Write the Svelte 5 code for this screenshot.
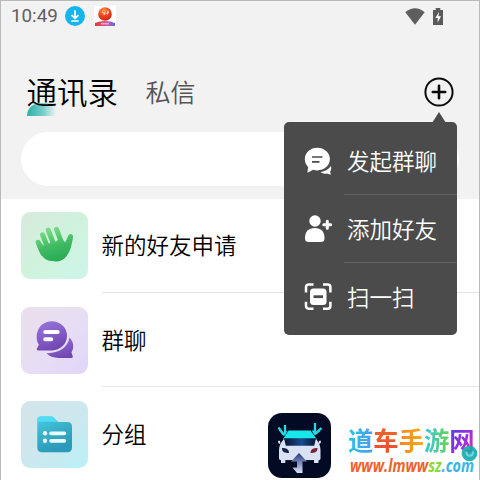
<script>
    const contacts = [
        { label: '新的好友申请', icon: 'hand' },
        { label: '群聊', icon: 'chat' },
        { label: '分组', icon: 'folder' }
    ];

    const actions = [
        { label: '发起群聊', icon: 'bubble' },
        { label: '添加好友', icon: 'person' },
        { label: '扫一扫', icon: 'scan' }
    ];

    const siteName = ['道', '车', '手', '游', '网'];

    let tab = $state('contacts');
    let menuOpen = $state(true);
</script>

<div class="phone">
    <header>
        <div class="status">
            <span class="time">10:49</span>
            <svg class="download" width="20" height="20" viewBox="0 0 20 20">
                <circle cx="10" cy="10" r="10" fill="#16b5ee" />
                <path d="M10 4.2v8M6.6 9.2l3.4 3.4 3.4-3.4M6.3 15h7.4" fill="none" stroke="#fff" stroke-width="1.7" />
            </svg>
            <svg class="app" width="22" height="20" viewBox="0 0 22 20">
                <defs>
                    <radialGradient id="ball" cx=".4" cy=".25" r=".75">
                        <stop offset="0" stop-color="#ff9a4d" />
                        <stop offset=".5" stop-color="#f4491d" />
                        <stop offset="1" stop-color="#cf2414" />
                    </radialGradient>
                    <linearGradient id="ribbon">
                        <stop offset="0" stop-color="#dd3b2d" />
                        <stop offset=".55" stop-color="#d25aa0" />
                        <stop offset="1" stop-color="#6c62ee" />
                    </linearGradient>
                </defs>
                <rect width="22" height="20" fill="#fff" />
                <circle cx="11" cy="8" r="6.8" fill="url(#ball)" />
                <path d="M8 6l3 2M10 9l1.500-3.500M12.500 7.500l2.500-1.500M14 4.500l-.5 4" stroke="#ffe3cf" stroke-width="1" fill="none" />
                <path d="M1 17q10-4 20 0v3H1z" fill="url(#ribbon)" />
                <path d="M7 17.800h8" stroke="#fff" stroke-width="1" stroke-dasharray="1.500 .6" />
            </svg>
            <svg class="wifi" width="20" height="17" viewBox="0 0 20 17">
                <path d="M.3 4.200Q10-3.500 19.700 4.200L10 16.800z" fill="#5e5e5e" />
            </svg>
            <svg class="battery" width="10" height="17" viewBox="0 0 10 17">
                <path d="M0 2h2.700V0h4.600v2H10v15H0z" fill="#5a5a5a" />
                <path d="M6 4L2.300 10h2.400v4.500L8 8.300H5.500z" fill="#fff" />
            </svg>
        </div>
        <div class="tabs">
            <button class="tab" class:active={tab === 'contacts'} onclick={() => (tab = 'contacts')}>通讯录</button>
            <button class="tab" class:active={tab === 'direct'} onclick={() => (tab = 'direct')}>私信</button>
            <button class="plus" aria-label="更多" onclick={() => (menuOpen = !menuOpen)}>
                <svg width="30" height="30" viewBox="0 0 30 30">
                    <circle cx="15" cy="15" r="13.600" fill="none" stroke="#0b0b0b" stroke-width="2" />
                    <path d="M15 8.800v12.400M8.800 15h12.400" stroke="#0b0b0b" stroke-width="2.600" stroke-linecap="round" />
                </svg>
            </button>
        </div>
        <div class="search"></div>
    </header>

    <main>
        {#each contacts as item}
            <div class="row">
                <div class="tile {item.icon}">
                    {#if item.icon === 'hand'}
                        <svg width="67" height="67" viewBox="0 0 67 67">
                            <defs>
                                <linearGradient id="hand" gradientUnits="userSpaceOnUse" x1="27" y1="13" x2="39" y2="52">
                                    <stop offset="0" stop-color="#85e58b" />
                                    <stop offset=".5" stop-color="#43bd65" />
                                    <stop offset="1" stop-color="#21a64b" />
                                </linearGradient>
                            </defs>
                            <g stroke="url(#hand)" stroke-width="5" stroke-linecap="round">
                                <path d="M17.200 30.300l4.800 11" />
                                <path d="M21.500 22.800l6 15" />
                                <path d="M27.200 18l6.500 17" />
                                <path d="M35.500 17.300l6.500 17" />
                            </g>
                            <path
                                d="M15.200 31.500l4-1.500 3.500 3.500 3-2.500 3 .2 2.500-2 3.500.5 2.500-2.200 2.700-1.500 3 3.200c.5 1 1.400 1 1.900.1l2.500-5.700c1.500-3 5.400-1.800 4.700 1.700-1.300 8-2.600 13.600-6.200 18.400-3.400 4.500-8.400 6.900-14.600 5.400C22.500 49 18.300 41.500 15.200 31.500z"
                                fill="url(#hand)"
                            />
                        </svg>
                    {:else if item.icon === 'chat'}
                        <svg width="67" height="67" viewBox="0 0 67 67">
                            <defs>
                                <linearGradient id="talk" x1=".2" y1="0" x2=".6" y2="1">
                                    <stop offset="0" stop-color="#9874dc" />
                                    <stop offset="1" stop-color="#7145af" />
                                </linearGradient>
                            </defs>
                            <path d="M48.500 30.500c4.200 4.300 4.900 10.200 1.900 14.800l1.300 3.800c.4 1.300-.2 1.900-1.400 1.900H37.500c-5 0-9.200-1.500-12-4.900 11.500.6 21.500-5.500 23-15.600z" fill="url(#talk)" />
                            <path d="M30.800 14.300c8.600 0 15.200 6.400 15.200 14.500S39.400 43.400 30.800 43.400H17.300c-1.500 0-2-.9-1.300-2.100l1.900-3.500C12.500 28.700 17.500 14.300 30.800 14.300z" fill="url(#talk)" />
                            <path d="M24.200 25h12.500M24.200 32.300h6" stroke="#fff" stroke-width="4" stroke-linecap="round" />
                        </svg>
                    {:else}
                        <svg width="67" height="67" viewBox="0 0 67 67">
                            <defs>
                                <linearGradient id="folder" x1="0" y1="0" x2=".4" y2="1">
                                    <stop offset="0" stop-color="#49cfe5" />
                                    <stop offset=".5" stop-color="#39afc9" />
                                    <stop offset="1" stop-color="#299ab9" />
                                </linearGradient>
                            </defs>
                            <path d="M20 15.600h10.500c3 0 4.500 5.400 7.500 5.400h8.300c3.200 0 4.700 1.500 4.700 4.600v20.900c0 3.200-1.500 4.700-4.700 4.700H21c-3.200 0-4.700-1.500-4.700-4.700V19.500c0-2.600 1.200-3.900 3.700-3.900z" fill="url(#folder)" />
                            <path d="M20 15.600h10.500c2.600 0 4 4 6.300 5.100H20.500c-2 0-3.500.4-4.200 1.700v-2.900c0-2.600 1.200-3.900 3.700-3.900z" fill="#50dcf3" />
                            <path d="M30 32.300h13.300M30 39.800h13.300" stroke="#e9fbff" stroke-width="3.700" stroke-linecap="round" />
                            <circle cx="24" cy="32.300" r="2.200" fill="#e9fbff" />
                            <circle cx="24" cy="39.800" r="2.200" fill="#e9fbff" />
                        </svg>
                    {/if}
                </div>
                <div class="label">{item.label}</div>
            </div>
        {/each}
    </main>

    {#if menuOpen}
        <div class="menu">
            {#each actions as action}
                <div class="action">
                    <svg width="28" height="28" viewBox="0 0 28 28" fill="#fff">
                        {#if action.icon === 'bubble'}
                            <path d="M13.300.8c7 0 12.600 4.900 12.600 11.300S20.300 23.400 13.300 23.400c-1.500 0-2.900-.2-4.200-.6L4.600 25.300c-.7.400-1.300 0-1.100-.8l.6-4.500C2 18 .8 15.300.8 12.100.8 5.700 6.300.8 13.300.8z" />
                            <path d="M26.800 19c.8 2 .6 4-.7 5.600l.6 2.200c.1.700-.3 1-.9.800l-2.700-1.100c-2.500.6-4.800 0-6.500-1.500 4.600-.5 8.200-2.600 10.200-6z" />
                            <path d="M8 10h10.500M8 14.800h7.500" stroke="#4b4b4b" stroke-width="1.700" />
                        {:else if action.icon === 'person'}
                            <circle cx="11" cy="6" r="5.700" />
                            <path d="M1 23C1 16.500 4.600 13 10.800 13S20.500 16.500 20.500 23c0 3-1.300 4-4 4H5c-2.700 0-4-1-4-4z" />
                            <path d="M23.300 6.200v7M19.800 9.700h7" stroke="#fff" stroke-width="3" stroke-linecap="round" />
                        {:else}
                            <path d="M2 9.500V4.200C2 2.500 3 1.500 4.700 1.500H9.500M19 1.500h4.700C25.400 1.500 26.400 2.500 26.400 4.200v5.300M26.400 18.700v4.300c0 1.700-1 2.700-2.700 2.700H19M9.500 25.700H4.700C3 25.700 2 24.700 2 23v-4.300" fill="none" stroke="#fff" stroke-width="2.500" />
                            <rect x="6" y="5.500" width="16.500" height="16.500" rx="3.500" />
                            <path d="M9.500 13.700h9.500" stroke="#4b4b4b" stroke-width="2.800" />
                        {/if}
                    </svg>
                    <div class="name">{action.label}</div>
                </div>
            {/each}
        </div>
    {/if}

    <svg class="logo" width="63" height="65" viewBox="0 0 63 65">
        <defs>
            <linearGradient id="glass">
                <stop offset="0" stop-color="#081433" />
                <stop offset=".55" stop-color="#174b8c" />
                <stop offset="1" stop-color="#081433" />
            </linearGradient>
            <linearGradient id="arrow" x1="0" y1="0" x2="0" y2="1">
                <stop offset="0" stop-color="#24347a" />
                <stop offset="1" stop-color="#dce5fa" />
            </linearGradient>
        </defs>
        <rect width="63" height="65" rx="14" fill="#030a23" />
        <path d="M10.500 14.500l5 7M17 12v9.500M53.500 15l-6 5.700M47 10v11" stroke="#23d9e6" stroke-width="2.300" fill="none" />
        <path d="M11.500 17l4.500 5 2.500-4M52 17.500l-5 4-2.500-4" stroke="#23d9e6" stroke-width="1.500" fill="none" />
        <path d="M20.500 17.500h22l6.500 9H14.800z" fill="#18e8e9" />
        <path d="M15.500 26.500h33c3 4 4 7 4 11v8c0 1-1 1.800-2 1.800V50h-4.500v-2.700H17.500V50H13v-2.700c-1-.2-2-1-2-2.100v-8c0-4 1.500-7.200 4.500-10.700z" fill="#d9e1f4" />
        <path d="M16 25.300h32l-1.800 7.500H17.800z" fill="url(#glass)" />
        <path d="M14 35c4 0 7 1 7 5-4 0-7-.5-7-5z" fill="#172244" />
        <path d="M49.500 35c-4 0-7 1-7 5 4 0 7-.5 7-5z" fill="#79203c" />
        <path d="M17.500 47.300h28.500V50h-28.500z" fill="#030a23" />
        <path d="M31 40l8 8.500h-4.500V60H29l-4.500-5.500H29v-6h-6z" fill="url(#arrow)" />
        <path d="M10.500 27.500c1.500 0 2 1 1.800 3.500-2.200-.3-2.800-2-1.800-3.500zM52.500 27.500c-1.500 0-2 1-1.800 3.500 2.200-.3 2.800-2 1.800-3.500z" fill="#dce4f5" />
    </svg>

    <div class="site">
        <div class="sitename">
            {#each siteName as char, i}<span class="c{i}">{char}</span>{/each}
        </div>
        <div class="url"><span class="u0">www.lmww</span><span class="u1">sz</span><span class="u2">.com</span></div>
    </div>
    <svg class="badge" width="17" height="17" viewBox="0 0 17 17">
        <circle cx="8.500" cy="8.500" r="7.800" fill="#15aaa8" fill-opacity=".9" />
        <path d="M5.500 6.500C5 12.500 12 12 12 6.500" fill="none" stroke="#70d5ed" stroke-width="2" />
    </svg>
</div>

<style>
    :global(body) {
        overflow: hidden;
    }

    .phone {
        position: relative;
        box-sizing: border-box;
        width: 480px;
        height: 480px;
        overflow: hidden;
        border: 1px solid #b9b9b9;
        border-bottom: 0;
        background: #fff;
        font-family: Roboto, 'Noto Sans CJK SC', sans-serif;
        font-weight: 350;
        color: #000;
    }

    svg {
        display: block;
        flex: none;
    }

    header {
        box-sizing: border-box;
        height: 198px;
        background: #f2f2f2;
    }

    .status {
        display: flex;
        align-items: center;
        height: 30px;
        padding: 0 36px 0 10px;
    }

    .time {
        width: 54px;
        font-size: 18.8px;
        font-weight: 400;
        color: #606060;
    }

    .app {
        margin-left: 9px;
    }

    .wifi {
        margin-left: auto;
    }

    .battery {
        margin-left: 8px;
    }

    button {
        padding: 0;
        border: 0;
        background: none;
        font-family: inherit;
        font-weight: inherit;
    }

    .tabs {
        display: flex;
        align-items: center;
        height: 62px;
        margin-top: 30px;
        padding: 0 25px 0 25.5px;
    }

    .tab {
        margin-right: 27.5px;
        padding-top: 4px;
        font-size: 25px;
        line-height: 36px;
        color: #555;
    }

    .tab.active {
        position: relative;
        z-index: 0;
        font-size: 30.5px;
        color: #000;
    }

    .tab.active::before {
        content: '';
        position: absolute;
        z-index: -1;
        left: 0;
        bottom: -4px;
        width: 29px;
        height: 13px;
        border-radius: 13px 0 0 0;
        background: linear-gradient(90deg, #2cafaa, #75cdc8 55%, #f2f2f2);
    }

    .plus {
        margin-left: auto;
    }

    .search {
        height: 54px;
        margin: 9px 20px 0;
        border-radius: 27px;
        background: #fff;
    }

    main {
        margin-top: -0.8px;
    }

    .row {
        display: flex;
        align-items: center;
        height: 94.6px;
        padding-left: 20px;
    }

    .tile {
        width: 67px;
        height: 67px;
        border-radius: 9px;
        overflow: hidden;
    }

    .hand {
        background: linear-gradient(135deg, #d8eadd, #cff3dd 55%, #cdf4ea);
    }

    .chat {
        background: linear-gradient(135deg, #eadfea, #e7def4 50%, #e1d5fa);
    }

    .folder {
        background: linear-gradient(135deg, #d4e4e9, #cce8ef 55%, #baf0f8);
    }

    .label {
        flex: 1;
        box-sizing: border-box;
        height: 94.6px;
        margin-left: 13.5px;
        border-bottom: 1px solid #e4e4e4;
        font-size: 22.5px;
        line-height: 97px;
    }

    .menu {
        position: absolute;
        left: 283px;
        top: 121px;
        box-sizing: border-box;
        width: 173px;
        height: 213px;
        padding: 5px 0 4px 20px;
        border-radius: 5px;
        background: #4b4b4b;
        color: #fff;
    }

    .menu::before {
        content: '';
        position: absolute;
        right: 11.5px;
        top: -10px;
        border: solid transparent;
        border-width: 0 7px 11px;
        border-bottom-color: #4b4b4b;
    }

    .action {
        display: flex;
        align-items: center;
        height: 68px;
    }

    .name {
        flex: 1;
        box-sizing: border-box;
        height: 68px;
        margin-left: 12px;
        padding-left: 3px;
        border-bottom: 1px solid #626262;
        font-size: 22.5px;
        line-height: 70px;
    }

    .action:last-child .name {
        border-bottom: 0;
    }

    .logo {
        position: absolute;
        left: 267px;
        top: 412px;
    }

    .site {
        position: absolute;
        left: 347px;
        top: 422px;
        width: 128px;
        white-space: nowrap;
    }

    .sitename {
        display: flex;
        font-family: 'Noto Sans CJK SC', sans-serif;
        font-size: 25.3px;
        line-height: 32px;
        font-weight: 700;
    }

    .sitename span {
        background-clip: text;
        color: transparent;
    }

    .c0 {
        background-image: linear-gradient(90deg, #27c4e5, #4b9cf0);
    }

    .c1 {
        background-image: linear-gradient(#f06a24, #ec4930);
    }

    .c2 {
        background-image: linear-gradient(90deg, #f28622, #f9ad18);
    }

    .c3 {
        background-image: linear-gradient(90deg, #36c5dd, #64d557);
    }

    .c4 {
        background-image: linear-gradient(120deg, #4340e4, #9d2fe0 60%, #e63398);
    }

    .url {
        display: flex;
        width: max-content;
        font-family: 'Open Sans', sans-serif;
        font-size: 18px;
        line-height: 20px;
        font-style: italic;
        font-weight: 700;
        transform: translateX(2px) scaleX(.8);
        transform-origin: 0 50%;
    }

    .u0 {
        color: #ee622c;
    }

    .u1 {
        color: #8bd936;
    }

    .u2 {
        color: #36b6e8;
    }

    .badge {
        position: absolute;
        left: 460px;
        top: 444px;
    }
</style>
